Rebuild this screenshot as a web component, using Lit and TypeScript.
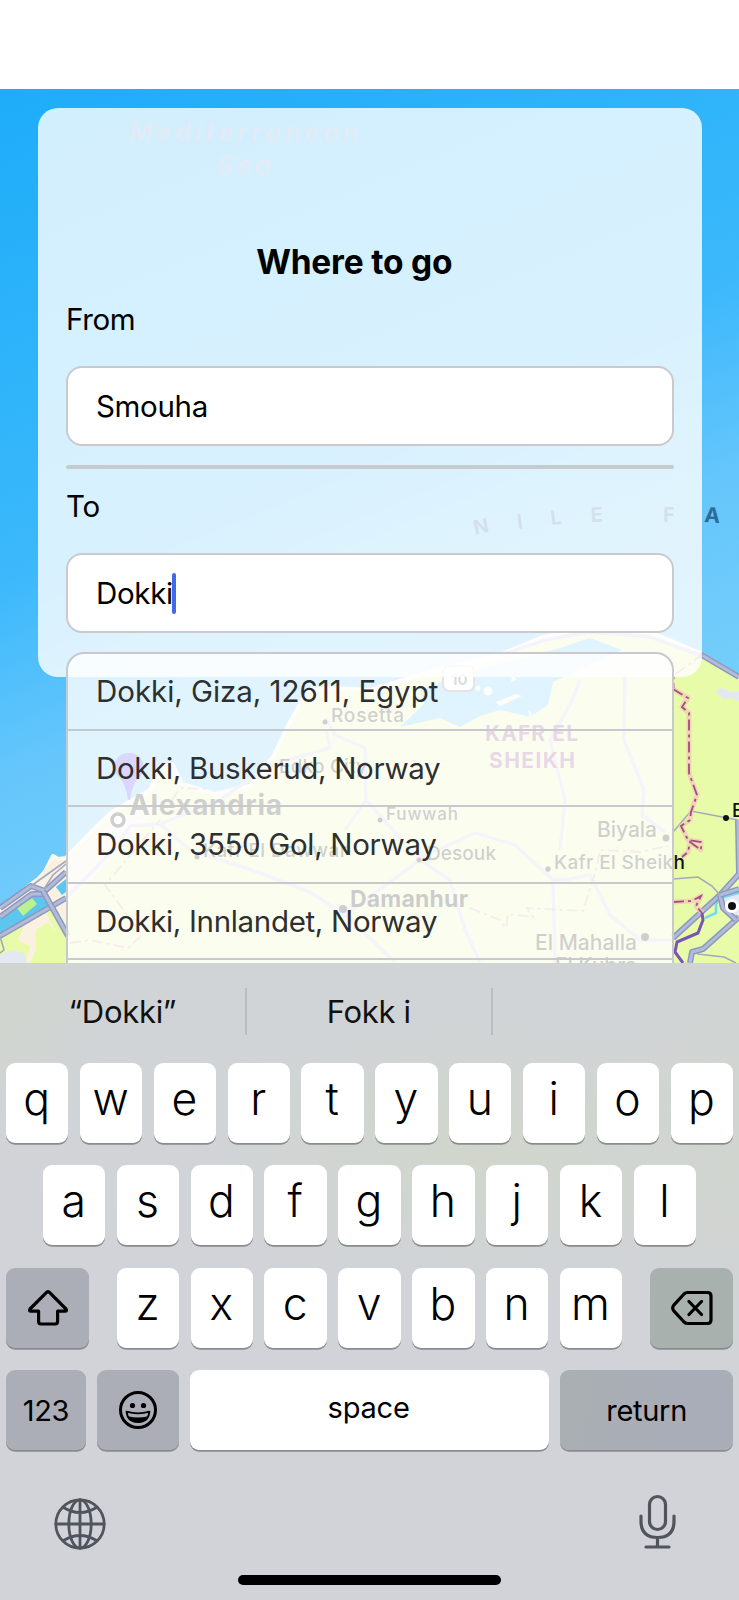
import { LitElement, html, svg, css } from "lit";
import { customElement, property } from "lit/decorators.js";

@customElement("map-view")
class MapView extends LitElement {
  static styles = css`
    :host { display: block; }
    svg { display: block; width: 739px; height: 874px; font-family: Inter, "Liberation Sans", sans-serif; }
    .land { fill: #e8fba8; stroke: #fffaf0; stroke-width: 4; stroke-linejoin: round; }
    .sand { fill: #fbf1e2; }
    .urban { fill: #e3e8f2; }
    .green { fill: #b9f28f; }
    .lake { fill: #62c6fa; }
    .inlet { fill: #5cc6ee; }
    .islet { fill: #f3fbd8; }
    .road { fill: none; stroke: #8e99bd; stroke-width: 6; stroke-linejoin: round; }
    .road-core { fill: none; stroke: #b1bbdb; stroke-width: 3; stroke-linejoin: round; }
    .lane { fill: none; stroke: #a3a9c0; stroke-width: 1.6; }
    .minor { fill: none; stroke: #cdc9e8; stroke-width: 3.5; stroke-linejoin: round; }
    .halo { fill: none; stroke: #f4c8b8; stroke-width: 5; stroke-linejoin: round; opacity: 0.75; }
    .border { fill: none; stroke: #a04f80; stroke-width: 1.8; stroke-dasharray: 11 4 3 4; }
    .faint { stroke: #cf7f9f; opacity: 0.75; }
    .violet { fill: none; stroke: #7a55b5; stroke-width: 3; stroke-linejoin: round; }
    .sea { fill: #7f97c4; opacity: 0.85; font-weight: 600; font-style: italic; font-size: 25px; }
    .farm { fill: #2b6b98; font-weight: 700; font-size: 20px; }
    .gov { fill: #8a3a84; font-weight: 700; font-size: 21px; }
    .town { fill: #111; font-weight: 500; font-size: 19px; }
    .mid { font-size: 21px; }
    .big { font-weight: 700; font-size: 23px; }
    .city { fill: #111; font-weight: 700; font-size: 28px; }
    .dot { fill: #111; }
  `;
  render() {
    const roads = [
      "M0 908L31 886L45 891L66 872", "M0 917L32 894L44 894", "M0 936L66 898", "M43 891L68 936",
      "M700 654L739 677", "M673 938L720 895L739 874", "M739 917L703 949L692 952L690 963",
      "M720 895L723 908L736 920", "M720 895L739 889", "M738 820L739 874",
    ];
    const minors = [
      "M66 898L115 848L130 826L160 824L190 850L260 873L310 892L345 915",
      "M160 824L220 800L270 765L330 748L326 730", "M326 718L335 735L365 748L366 800L345 830",
      "M345 915L420 860L450 880L465 930L480 962", "M366 800L420 860",
      "M555 963L553 880L565 880L590 875L610 915L640 940L674 940",
      "M553 880L515 845L475 833L420 858", "M560 850L565 800L550 740L570 705L580 680",
      "M625 675L624 740L644 790L642 815L665 832", "M500 655L545 640L590 632L650 637L703 656",
      "M345 915L395 962",
    ];
    const edges = [
      "M673 689L688 698L682 707L689 713L689 773L697 795L691 812L690 820L681 826L688 840L701 842L701 850L690 842L688 852L682 857",
      "M673 902L692 901L701 896L696 906L702 913",
    ];
    const inner = [
      "M703 654L674 675L674 688",
      "M470 908L500 920L506 928L508 914L533 917L527 908L583 911L596 870L600 850L640 852L668 846",
      "M70 943L90 940L128 948L142 935L105 885L160 820", "M172 800L180 788L210 789",
    ];
    const dots: [number, number, number][] = [
      [325, 722, 2.5], [380, 820, 2.5], [419, 860, 2.5], [548, 869, 2.7], [666, 838, 3.5],
      [343, 909, 4], [645, 937, 4], [726, 818, 3], [197, 857, 2.5],
    ];
    return html`<svg viewBox="0 89 739 874">
      <defs>
        <linearGradient id="water" x1="0" y1="0" x2="0.35" y2="1">
          <stop offset="0" stop-color="#1eacf9" />
          <stop offset="0.3" stop-color="#2fb4fa" />
          <stop offset="0.5" stop-color="#3cb8fb" />
          <stop offset="0.7" stop-color="#65c6fb" />
          <stop offset="1" stop-color="#7bd1fa" />
        </linearGradient>
      </defs>
      <rect x="0" y="89" width="739" height="874" fill="url(#water)" />
      <path class="land" d="M-6 914L30 885L43 876L53 856L58 859L66 858L95 828L112 812L150 790L160 768L172 764L182 784L215 794L250 786L273 757L290 722L308 690L330 688L370 690L430 672L500 655L540 638L590 626L650 632L700 653L745 680V970H-6Z" />
      <path class="lake" d="M400 727L424 704L420 690L470 672L560 648L590 638L622 650L553 682L548 705L530 717L500 710L480 716L460 727L440 718Z" />
      <circle class="islet" cx="488" cy="691" r="4.5" /><circle class="islet" cx="478" cy="688" r="2.5" />
      <path class="islet" d="M496 702l20 -8l6 2l-22 10zM512 676l5 3l-6 3zM528 710l4 3l-2 5z" />
      <path class="sand" d="M0 912L30 885L53 860L66 860V925L40 893L0 930Z" />
      <path class="sand" d="M66 860L120 815L165 800L120 850L66 905Z" />
      <path class="inlet" d="M0 917L32 895H43L50 906L0 933Z" />
      <path class="inlet" d="M56 887L66 879V892L62 895Z" />
      <path class="green" d="M17 908L32 898L37 904L23 916Z" />
      <path class="sand" d="M24 926L46 913L57 934L48 922L36 930L36 950L30 963H26L30 946L18 940Z" />
      <path class="urban" d="M0 955L12 950L24 953L27 963H0Z" />
      <path class="urban" d="M715 691l8 -3l8 4h8v9l-8 -3l-8 1z" />
      <path class="urban" d="M722 895L739 889V914L732 918L724 908Z" />
      <path d="M705 918L716 913V904L720 898L739 893" fill="none" stroke="#6fdcf5" stroke-width="2.5" />
      ${minors.map((d) => svg`<path class="minor" d=${d} />`)}
      ${roads.map((d) => svg`<path class="road" d=${d} /><path class="road-core" d=${d} />`)}
      <path class="lane" d="M31 886L66 861M44 889L53 875L66 864M673 832L691 811L738 820M673 879L698 877L712 886L720 895M697 954L724 957L736 963M0 936L4 950L0 953" />
      ${edges.map((d) => svg`<path class="halo" d=${d} /><path class="border" d=${d} />`)}
      ${inner.map((d) => svg`<path class="border faint" d=${d} />`)}
      <path class="violet" d="M702 913L703 920L698 933L677 942L675 952L683 963" />
      <path d="M129 753a14 14 0 0 1 12 22Q132 783 130 800H128Q126 783 117 775a14 14 0 0 1 12 -22Z" fill="#4a35e8" />
      <text class="sea" x="129" y="141" textLength="229">Mediterranean</text>
      <text class="sea" x="217" y="174" textLength="53">Sea</text>
      <g class="farm">
        <text transform="translate(475 535) rotate(-12)">N</text><text transform="translate(518 529) rotate(-8)">I</text>
        <text transform="translate(551 525) rotate(-6)">L</text><text transform="translate(591 522) rotate(-3)">E</text>
        <text x="663" y="522">F</text><text transform="translate(704 522) rotate(4)" font-size="21">A</text>
      </g>
      <rect x="443" y="666" width="31" height="25" rx="6" fill="#fff" stroke="#777" stroke-width="2" />
      <text x="451" y="685" font-size="15" font-weight="700" fill="#555">10</text>
      <g class="town">
        <text x="331" y="722" textLength="73">Rosetta</text>
        <text x="279" y="773" textLength="88">Edko City</text>
        <text x="386" y="820" textLength="72" font-size="17">Fuwwah</text>
        <text x="203" y="857" textLength="144">Kafr El Dawwar</text>
        <text x="427" y="860" textLength="69">Desouk</text>
        <text x="554" y="869" textLength="131">Kafr El Sheikh</text>
        <text class="mid" x="597" y="837" textLength="60">Biyala</text>
        <text class="mid" x="535" y="950" textLength="102">El Mahalla</text>
        <text class="mid" x="555" y="973" textLength="82">El Kubra</text>
        <text x="732" y="817">B</text>
      </g>
      <text class="gov" x="485" y="741" textLength="93">KAFR EL</text>
      <text class="gov" x="489" y="768" textLength="86">SHEIKH</text>
      <text class="big" x="350" y="907" textLength="118">Damanhur</text>
      <text class="city" x="129" y="815" textLength="153">Alexandria</text>
      <circle cx="118" cy="820" r="6" fill="#fff" stroke="#111" stroke-width="3.5" />
      ${dots.map(([x, y, r]) => svg`<circle class="dot" cx=${x} cy=${y} r=${r} />`)}
      <circle cx="732" cy="906" r="7" fill="#fff" /><circle class="dot" cx="732" cy="906" r="4" />
    </svg>`;
  }
}

@customElement("trip-panel")
class TripPanel extends LitElement {
  @property({ attribute: false }) results: string[] = [
    "Dokki, Giza, 12611, Egypt",
    "Dokki, Buskerud, Norway",
    "Dokki, 3550 Gol, Norway",
    "Dokki, Innlandet, Norway",
    "",
  ];
  static styles = css`
    :host { display: block; }
    .card {
      box-sizing: border-box; width: 664.5px; height: 568.7px; margin: 19px 0 0 37.5px; padding: 133px 28.5px 0;
      border-radius: 20px; background: rgba(255, 255, 255, 0.8); color: #000;
      font: 400 29.5px/36px Inter, "Liberation Sans", sans-serif; letter-spacing: -0.33px;
    }
    h1 { margin: 0 31px 20px 0; font-size: 33.5px; line-height: 42.5px; height: 40px; font-weight: 700; text-align: center; letter-spacing: -0.2px; }
    .label { padding-bottom: 29px; }
    .field {
      box-sizing: border-box; height: 80px; display: flex; align-items: center; padding-left: 28px;
      border: 2px solid #c8cacd; border-radius: 16px; background: #fff;
    }
    .rule { height: 4px; border-radius: 2px; background: #c7cbce; margin: 19px 0 19.3px; }
    .caret { width: 3.5px; height: 41px; border-radius: 2px; background: #4169e8; margin-left: -0.5px; }
    .list {
      margin: 19.2px 0 0; padding: 0; list-style: none; background: rgba(255, 255, 255, 0.8);
      border: 2px solid #c8c9cd; border-radius: 18px 18px 0 0; background-clip: padding-box; color: #2d2f30;
    }
    .item { box-sizing: border-box; height: 76.5px; line-height: 75px; padding-left: 28px; border-bottom: 2px solid #c8c9cd; white-space: nowrap; }
    .item:first-child { letter-spacing: -0.04px; }
  `;
  render() {
    return html`<section class="card">
      <h1>Where to go</h1>
      <div class="label">From</div>
      <div class="field">Smouha</div>
      <div class="rule"></div>
      <div class="label">To</div>
      <div class="field">Dokki<span class="caret"></span></div>
      <ul class="list">${this.results.map((r) => html`<li class="item">${r}</li>`)}</ul>
    </section>`;
  }
}

@customElement("soft-keyboard")
class SoftKeyboard extends LitElement {
  static styles = css`
    :host {
      display: block; box-sizing: border-box; height: 637px; overflow: hidden; color: #000;
      background:
        radial-gradient(ellipse 300px 150px at 480px 190px, rgba(208, 214, 203, 0.9), rgba(208, 214, 203, 0)),
        radial-gradient(ellipse 160px 250px at 739px 180px, rgba(208, 213, 207, 0.9), rgba(208, 213, 207, 0)),
        radial-gradient(ellipse 120px 120px at 0 40px, rgba(207, 213, 203, 0.8), rgba(207, 213, 203, 0)),
        linear-gradient(#d0d4d6, #d1d3d8 50%, #d1d3d9);
      font-family: Inter, "Liberation Sans", sans-serif;
    }
    .bar { display: grid; grid-template-columns: 244.7px 246px 248.3px; height: 100px; padding-top: 25px; box-sizing: border-box; }
    .word { height: 47px; line-height: 47px; text-align: center; font-size: 31px; letter-spacing: -0.3px; color: #111; box-sizing: border-box; }
    .word + .word { border-left: 2px solid #b9bdbf; }
    .row { display: flex; justify-content: center; gap: 11.5px; height: 80px; padding: 0 6px; margin-bottom: 22.4px; }
    .spread { justify-content: space-between; }
    .letters { display: flex; gap: 11.5px; }
    .key {
      width: 62.35px; height: 80px; border-radius: 9px; background: #fff; box-shadow: 0 1.7px 0 #898c8e;
      display: flex; align-items: center; justify-content: center; box-sizing: border-box; padding: 0 1px 8.5px 0;
      font-size: 44.5px; font-weight: 360;
    }
    .fn { background: #abaeb6; padding: 0; font-size: 29px; font-weight: 400; letter-spacing: -0.3px; }
    .side { width: 83px; }
    .tint { background: #a9b1ae; }
    .num { width: 80px; }
    .emoji { width: 81.7px; }
    .space { width: 359px; font-size: 29px; font-weight: 400; letter-spacing: -0.2px; padding: 0 2px 5px 0; }
    .return { width: 173px; background: linear-gradient(100deg, #a9afb2, #a9adb7 60%); }
    .foot { display: flex; justify-content: space-between; padding: 25.3px 54px 0; height: 52px; }
    .home { width: 263px; height: 9.5px; border-radius: 5px; background: #000; margin: 25.4px auto 0; }
    svg { display: block; fill: none; stroke: #000; stroke-linecap: round; stroke-linejoin: round; }
    .grey { stroke: #50545c; }
    .mic { margin-top: -3.7px; }
    .solid { fill: #000; stroke: none; }
  `;
  private keys(s: string) {
    return [...s].map((c) => html`<div class="key">${c}</div>`);
  }
  render() {
    return html`
      <div class="bar"><div class="word">“Dokki”</div><div class="word">Fokk i</div><div class="word"></div></div>
      <div class="row">${this.keys("qwertyuiop")}</div>
      <div class="row">${this.keys("asdfghjkl")}</div>
      <div class="row spread">
        <div class="key fn side"><svg width="42" height="38" viewBox="0 0 42 38" stroke-width="3.2"><path d="M19.8 3.2Q21 2.2 22.2 3.2L39 20Q40.3 22 38.3 22.2H30.6V32.6Q30.6 35 28.2 35H14Q11.6 35 11.6 32.6V22.2H3.7Q1.7 22 3 20Z" /></svg></div>
        <div class="letters">${this.keys("zxcvbnm")}</div>
        <div class="key fn side tint"><svg width="42" height="36" viewBox="0 0 42 36" stroke-width="3.2"><path d="M16.6 2.5H36.5Q40 2.5 40 6V30Q40 33.5 36.5 33.5H16.6Q14.6 33.5 13 32L2.6 20.6Q0.8 18 2.6 15.4L13 4Q14.6 2.5 16.6 2.5ZM18 11.5L30.5 24.5M30.5 11.5L18 24.5" /></svg></div>
      </div>
      <div class="row">
        <div class="key fn num">123</div>
        <div class="key fn emoji"><svg width="38" height="38" viewBox="0 0 38 38"><circle cx="19" cy="19" r="17.5" stroke-width="3" /><circle class="solid" cx="13.5" cy="14.5" r="2.6" /><circle class="solid" cx="24.5" cy="14.5" r="2.6" /><path stroke-width="1.9" d="M7.6 20.7Q19 24 30.4 20.7Q29.5 31 19 31Q8.5 31 7.6 20.7Z" /><path class="solid" d="M9 25.2Q19 28 29 25.2Q26 31.5 19 31.5Q12 31.5 9 25.2Z" /></svg></div>
        <div class="key space">space</div>
        <div class="key fn return">return</div>
      </div>
      <div class="foot">
        <svg class="grey" width="52" height="52" viewBox="0 0 52 52" stroke-width="2.8"><circle cx="26" cy="26" r="24.2" /><ellipse cx="26" cy="26" rx="11.2" ry="24.2" /><path d="M26 2V50M2 26H50M9.5 9.5Q26 19.5 42.5 9.5M9.5 42.5Q26 32.5 42.5 42.5" /></svg>
        <svg class="grey mic" width="54" height="59" viewBox="0 -3 54 59" stroke-width="3.2"><rect x="18.5" y="-0.5" width="16" height="33" rx="8" /><path d="M10 19V24Q10 40.5 26.5 40.5Q43 40.5 43 24V19M26.5 41V50M15 50H38" /></svg>
      </div>
      <div class="home"></div>
    `;
  }
}

@customElement("app-root")
class AppRoot extends LitElement {
  static styles = css`
    :host { display: block; width: 739px; height: 1600px; background: #fff; overflow: hidden; }
    .status { height: 89px; background: #fff; }
    .stage { display: grid; height: 874px; overflow: hidden; grid-template: 874px / 739px; }
    .layer { grid-area: 1 / 1; }
  `;
  render() {
    return html`
      <div class="status"></div>
      <div class="stage"><map-view class="layer"></map-view><trip-panel class="layer"></trip-panel></div>
      <soft-keyboard></soft-keyboard>
    `;
  }
}
